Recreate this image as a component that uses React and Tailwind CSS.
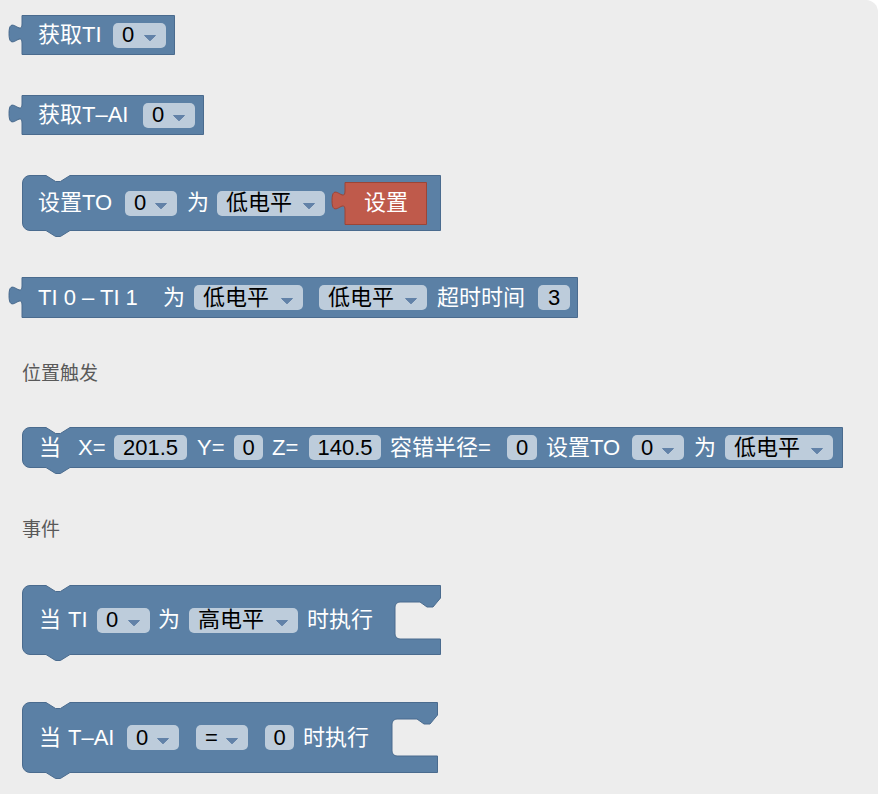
import React from 'react';

// Blockly-like palette blocks
const BLUE = '#5b80a5';
const EDGE = '#4a6b8e';

const outputPath = (w, h) =>
  `M13,0.5 H${w + 12.5} V${h - 0.5} H13 V28 c 0,-12.7 -13,10.2 -13,-9.5 s 13,3.2 13,-9.5 Z`;

const statementPath = (w, h) =>
  `M0.5,8 a7.5,7.5 0 0 1 7.5,-7.5 H24 l9.6,6 h4.8 l9.6,-6 H${w - 0.5} V${h - 0.5} H48 l-9.6,6 h-4.8 l-9.6,-6 H8 a7.5,7.5 0 0 1 -7.5,-7.5 Z`;

const cPath = (w, h) =>
  `M0.5,8 a7.5,7.5 0 0 1 7.5,-7.5 H24 l9.6,6 h4.8 l9.6,-6 H${w - 0.5} V13 L${w - 8},22 H${w - 14} L${w - 21},17 H${w - 41} a5,5 0 0 0 -5,5 V49 a5,5 0 0 0 5,5 H${w - 0.5} V${h - 0.5} H48 l-9.6,6 h-4.8 l-9.6,-6 H8 a7.5,7.5 0 0 1 -7.5,-7.5 Z`;

const Shape = ({ kind, w, h, fill = BLUE, stroke = EDGE }) => {
  if (kind === 'output') {
    return (
      <svg
        className="absolute top-0 left-[-13px] overflow-visible"
        width={w + 13}
        height={h}
        viewBox={`0 0 ${w + 13} ${h}`}
      >
        <path d={outputPath(w, h)} fill={fill} stroke={stroke} strokeWidth="1" />
      </svg>
    );
  }
  return (
    <svg className="absolute top-0 left-0 overflow-visible" width={w} height={h} viewBox={`0 0 ${w} ${h}`}>
      <path d={kind === 'c' ? cPath(w, h) : statementPath(w, h)} fill={fill} stroke={stroke} strokeWidth="1" />
    </svg>
  );
};

const Block = ({ kind, w, h, size, pad = 'pl-[16px]', className = '', children }) => (
  <div className={`relative shrink-0 ${size} ${className}`}>
    <Shape kind={kind} w={w} h={h} />
    <div className={`relative flex items-center h-full text-white ${pad}`}>{children}</div>
  </div>
);

const Arrow = () => (
  <svg className="mt-[6px] shrink-0" width="12" height="6" viewBox="0 0 12 6">
    <path d="M0.5,0.5 H11.5 L6,5.8 Z" fill="#6282a8" stroke="#6282a8" strokeLinejoin="round" />
  </svg>
);

const Field = ({ w, arrow, className = '', children }) => (
  <div
    className={`flex items-center shrink-0 h-[25px] rounded-[5px] bg-[#bdccdb] text-black ${w} ${
      arrow ? 'justify-between pl-[9px] pr-[10px]' : 'justify-center'
    } ${className}`}
  >
    <span className="leading-none whitespace-nowrap">{children}</span>
    {arrow && <Arrow />}
  </div>
);

const Txt = ({ w, className = '', children }) => (
  <span className={`shrink-0 leading-none whitespace-nowrap ${w} ${className}`}>{children}</span>
);

const SetButton = () => (
  <div className="relative shrink-0 w-[82px] h-[43px] ml-[20px]">
    <Shape kind="output" w={82} h={43} fill="#bf5a4b" stroke="#9c4536" />
    <div className="relative flex items-center justify-center h-full text-white leading-none">设置</div>
  </div>
);

export default function App() {
  return (
    <div className="w-[878px] h-[794px] bg-white">
      <div className="h-full bg-[#ededed] rounded-tr-[12px] pl-[22px] pt-[15px] flex flex-col items-start text-[22px] font-['Liberation_Sans','Noto_Sans_CJK_SC',sans-serif]">
        {/* value blocks */}
        <Block kind="output" w={153} h={40} size="w-[153px] h-[40px]">
          <Txt w="w-[75px]">获取TI</Txt>
          <Field w="w-[53px]" arrow>0</Field>
        </Block>

        <Block kind="output" w={182} h={40} size="w-[182px] h-[40px]" className="mt-[40px]">
          <Txt w="w-[105px]">获取T–AI</Txt>
          <Field w="w-[52px]" arrow>0</Field>
        </Block>

        <Block kind="stmt" w={419} h={56} size="w-[419px] h-[56px]" className="mt-[40px]">
          <Txt w="w-[87px]">设置TO</Txt>
          <Field w="w-[52px]" arrow>0</Field>
          <Txt w="w-[30px]" className="ml-[10px]">为</Txt>
          <Field w="w-[108px]" arrow>低电平</Field>
          <SetButton />
        </Block>

        <Block kind="output" w={556} h={41} size="w-[556px] h-[41px]" className="mt-[46px]">
          <Txt w="w-[125px]">TI 0 – TI 1</Txt>
          <Txt w="w-[31px]">为</Txt>
          <Field w="w-[109px]" arrow>低电平</Field>
          <Field w="w-[108px]" arrow className="ml-[16px]">低电平</Field>
          <Txt w="w-[101px]" className="ml-[10px]">超时时间</Txt>
          <Field w="w-[32px]">3</Field>
        </Block>

        <div className="mt-[44px] h-[24px] leading-[24px] text-[19px] text-[#595959]">位置触发</div>

        <Block kind="stmt" w={821} h={41} size="w-[821px] h-[41px]" pad="pl-[17px]" className="mt-[41px]">
          <Txt w="w-[39px]">当</Txt>
          <Txt w="w-[36px]">X=</Txt>
          <Field w="w-[73px]">201.5</Field>
          <Txt w="w-[37px]" className="ml-[10px]">Y=</Txt>
          <Field w="w-[29px]">0</Field>
          <Txt w="w-[37px]" className="ml-[9px]">Z=</Txt>
          <Field w="w-[72px]">140.5</Field>
          <Txt w="w-[117px]" className="ml-[9px]">容错半径=</Txt>
          <Field w="w-[30px]">0</Field>
          <Txt w="w-[86px]" className="ml-[9px]">设置TO</Txt>
          <Field w="w-[52px]" arrow>0</Field>
          <Txt w="w-[31px]" className="ml-[10px]">为</Txt>
          <Field w="w-[108px]" arrow>低电平</Field>
        </Block>

        <div className="mt-[50px] h-[24px] leading-[24px] text-[19px] text-[#595959]">事件</div>

        <Block kind="c" w={419} h={70} size="w-[419px] h-[70px]" pad="pl-[17px]" className="mt-[43px]">
          <Txt w="w-[29px]">当</Txt>
          <Txt w="w-[29px]">TI</Txt>
          <Field w="w-[53px]" arrow>0</Field>
          <Txt w="w-[31px]" className="ml-[8px]">为</Txt>
          <Field w="w-[109px]" arrow>高电平</Field>
          <Txt w="w-[70px]" className="ml-[9px]">时执行</Txt>
        </Block>

        <Block kind="c" w={416} h={71} size="w-[416px] h-[71px]" pad="pl-[17px]" className="mt-[47px]">
          <Txt w="w-[29px]">当</Txt>
          <Txt w="w-[59px]">T–AI</Txt>
          <Field w="w-[52px]" arrow>0</Field>
          <Field w="w-[52px]" arrow className="ml-[17px]">=</Field>
          <Field w="w-[29px]" className="ml-[17px]">0</Field>
          <Txt w="w-[70px]" className="ml-[9px]">时执行</Txt>
        </Block>
      </div>
    </div>
  );
}
